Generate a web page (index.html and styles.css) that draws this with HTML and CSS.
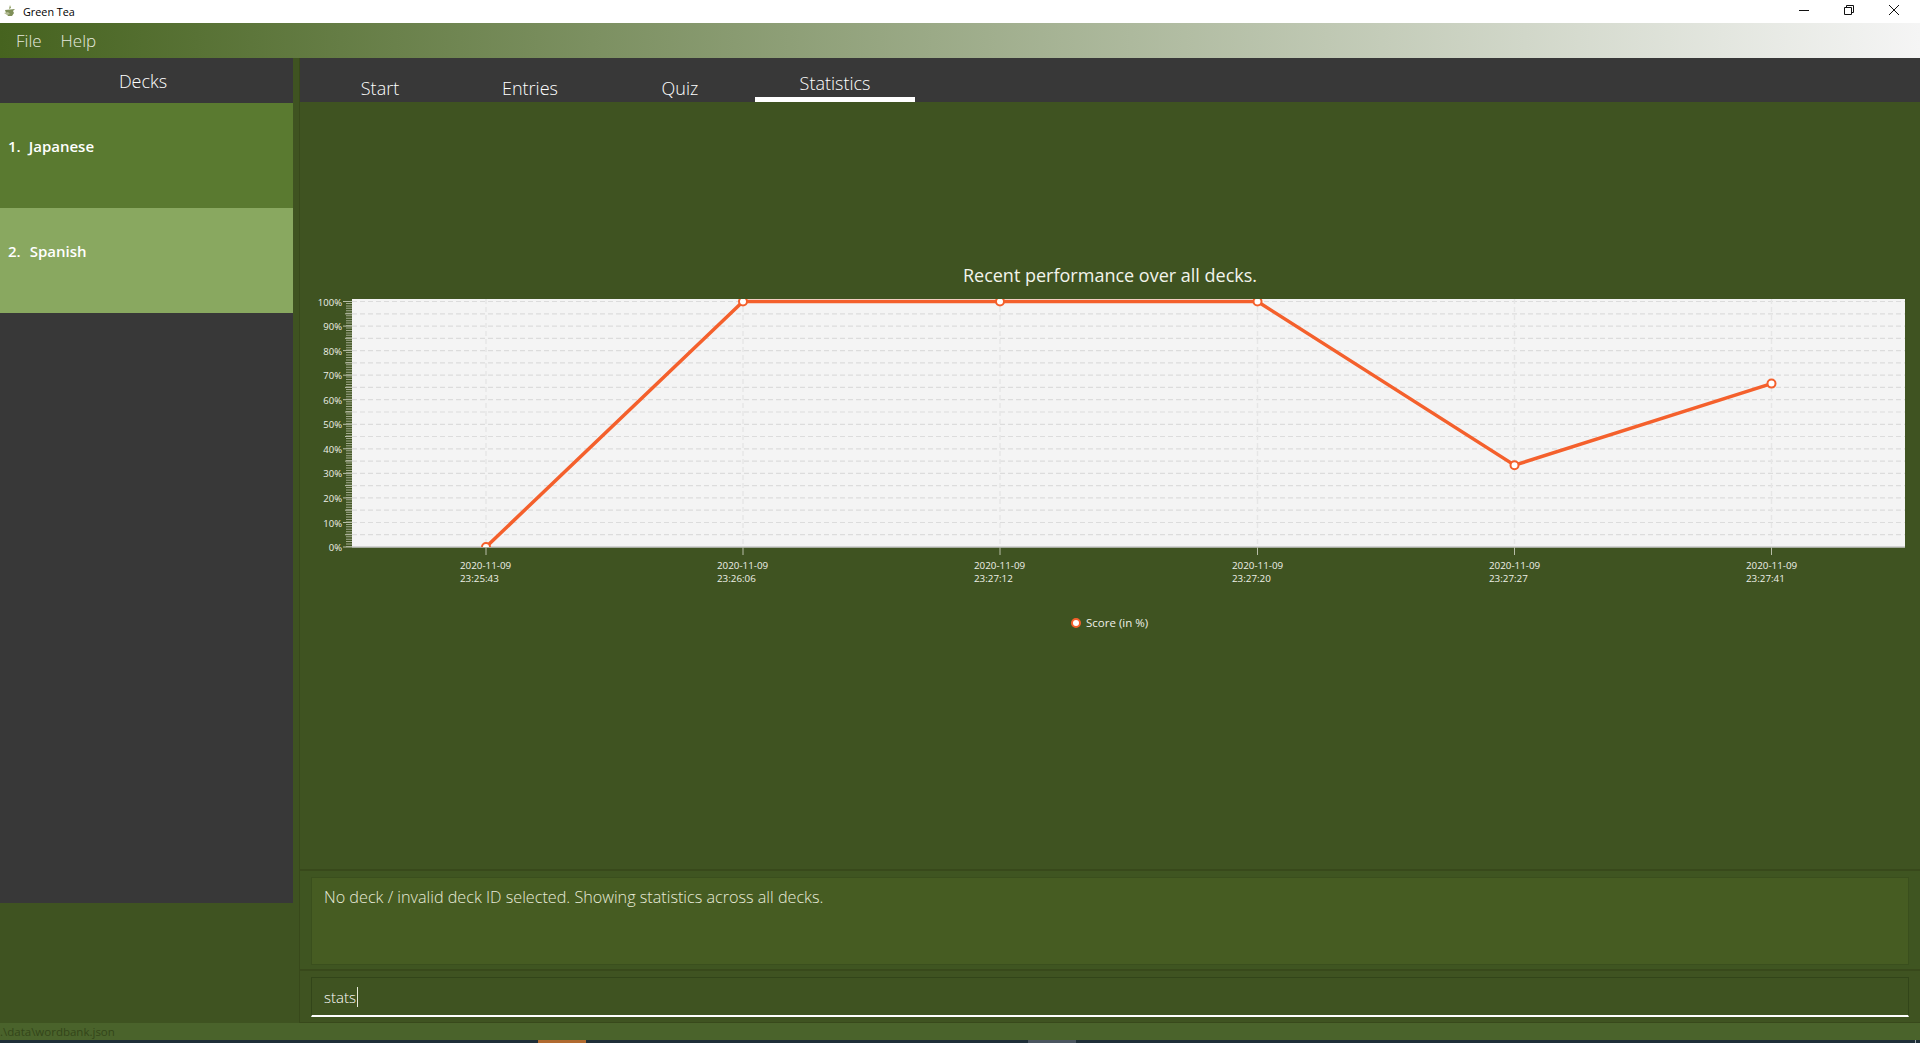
FILE: index.html
```html
<!DOCTYPE html>
<html lang="en">
<head>
  <meta charset="UTF-8" />
  <title>Green Tea</title>
  <link rel="stylesheet" href="styles.css">
</head>
<body>

  <header class="title-bar">
    <svg class="app-icon" width="12" height="13" viewBox="0 0 12 13">
      <path d="M6 0 L7 3 L5 4 Z" fill="#8a9a5a" />
      <path d="M1 5 L11 4 L9 6 L10 8 L8 11 L4 11 L2 8 Z" fill="#7f8f58" />
      <path d="M0 8 L4 7 L6 9 L3 10 Z" fill="#b5bd95" />
    </svg>
    <span class="app-name">Green Tea</span>
    <div class="win-controls">
      <svg width="12" height="12" viewBox="0 0 12 12"><path d="M1 6.5 H11" stroke="#111" fill="none" /></svg>
      <svg width="12" height="12" viewBox="0 0 12 12"><path d="M1.5 3.5 H8.5 V10.5 H1.5 Z M3.5 3.5 V1.5 H10.5 V8.5 H8.5" stroke="#111" fill="none" /></svg>
      <svg width="12" height="12" viewBox="0 0 12 12"><path d="M1 1 L11 11 M11 1 L1 11" stroke="#111" fill="none" /></svg>
    </div>
  </header>

  <nav class="menu-bar">
    <span class="menu-item">File</span>
    <span class="menu-item">Help</span>
  </nav>

  <main class="main">
    <aside class="sidebar">
      <div class="deck-panel">
        <h2 class="deck-title">Decks</h2>
        <div class="deck-card">
          <span class="deck-num">1.</span>
          <span>Japanese</span>
        </div>
        <div class="deck-card deck-card-selected">
          <span class="deck-num">2.</span>
          <span>Spanish</span>
        </div>
      </div>
    </aside>

    <section class="content">
      <div class="tabs">
        <div class="tab">Start</div>
        <div class="tab">Entries</div>
        <div class="tab">Quiz</div>
        <div class="tab tab-active">Statistics</div>
      </div>

      <div class="stats-pane">
        <h3 class="chart-title">Recent performance over all decks.</h3>
        <svg class="chart" width="1620" height="360" viewBox="300 287 1620 360">
          <defs>
            <clipPath id="plotClip"><rect x="352" y="299" width="1553" height="248" /></clipPath>
          </defs>
          <rect x="352" y="299" width="1553" height="248" fill="#f4f4f4" />

          <!-- grid every 5% -->
          <path class="grid-h" d="M352 301.5H1905 M352 313.8H1905 M352 326.1H1905 M352 338.3H1905 M352 350.6H1905 M352 362.9H1905 M352 375.2H1905 M352 387.4H1905 M352 399.7H1905 M352 412H1905 M352 424.3H1905 M352 436.5H1905 M352 448.8H1905 M352 461.1H1905 M352 473.4H1905 M352 485.6H1905 M352 497.9H1905 M352 510.2H1905 M352 522.5H1905 M352 534.7H1905" />
          <path class="grid-v" d="M486 299V547 M743 299V547 M1000 299V547 M1257.5 299V547 M1514.5 299V547 M1771.5 299V547" />

          <!-- axes -->
          <line class="tick-minor" x1="349" y1="547" x2="349" y2="301" />
          <path class="tick" d="M343 301.5H352 M343 326.1H352 M343 350.6H352 M343 375.2H352 M343 399.7H352 M343 424.3H352 M343 448.8H352 M343 473.4H352 M343 497.9H352 M343 522.5H352 M343 547H352" />
          <path class="tick" d="M345 313.8H352 M345 338.3H352 M345 362.9H352 M345 387.4H352 M345 412H352 M345 436.5H352 M345 461.1H352 M345 485.6H352 M345 510.2H352 M345 534.7H352" />
          <line class="axis-x" x1="352" y1="547" x2="1905" y2="547" />
          <path class="tick" d="M486 547V555 M743 547V555 M1000 547V555 M1257.5 547V555 M1514.5 547V555 M1771.5 547V555" />

          <g class="label-y">
            <text x="342" y="306">100%</text>
            <text x="342" y="330">90%</text>
            <text x="342" y="355">80%</text>
            <text x="342" y="379">70%</text>
            <text x="342" y="404">60%</text>
            <text x="342" y="428">50%</text>
            <text x="342" y="453">40%</text>
            <text x="342" y="477">30%</text>
            <text x="342" y="502">20%</text>
            <text x="342" y="527">10%</text>
            <text x="342" y="551">0%</text>
          </g>

          <g class="label-x">
            <text x="460" y="569">2020-11-09</text><text x="460" y="582">23:25:43</text>
            <text x="717" y="569">2020-11-09</text><text x="717" y="582">23:26:06</text>
            <text x="974" y="569">2020-11-09</text><text x="974" y="582">23:27:12</text>
            <text x="1232" y="569">2020-11-09</text><text x="1232" y="582">23:27:20</text>
            <text x="1489" y="569">2020-11-09</text><text x="1489" y="582">23:27:27</text>
            <text x="1746" y="569">2020-11-09</text><text x="1746" y="582">23:27:41</text>
          </g>

          <g clip-path="url(#plotClip)">
            <polyline class="series" points="486,547 743,301.5 1000,301.5 1257.5,301.5 1514.5,465.2 1771.5,383.6" />
            <circle class="dot" cx="486" cy="547" r="4" />
            <circle class="dot" cx="743" cy="301.5" r="4" />
            <circle class="dot" cx="1000" cy="301.5" r="4" />
            <circle class="dot" cx="1257.5" cy="301.5" r="4" />
            <circle class="dot" cx="1514.5" cy="465.2" r="4" />
            <circle class="dot" cx="1771.5" cy="383.6" r="4" />
          </g>

          <circle class="dot" cx="1076" cy="623" r="4" />
          <text class="legend" x="1086" y="627">Score (in %)</text>
        </svg>
      </div>

      <div class="result-wrap">
        <div class="result-box">No deck / invalid deck ID selected. Showing statistics across all decks.</div>
      </div>

      <div class="command-wrap">
        <div class="command-box"><span class="command-text">stats</span></div>
      </div>
    </section>
  </main>

  <footer class="status-bar">.\data\wordbank.json</footer>

  <div class="taskbar">
    <span class="task-orange"></span>
    <span class="task-grey"></span>
    <span class="task-tick"></span>
  </div>

</body>
</html>
```

FILE: styles.css
```css
* {
  box-sizing: border-box;
}

html, body {
  margin: 0;
  padding: 0;
}

body {
  width: 1920px;
  height: 1043px;
  overflow: hidden;
  display: flex;
  flex-direction: column;
  background-color: #3f5321;
  font-family: 'Open Sans', 'Noto Sans', sans-serif;
  color: white;
}

.title-bar {
  height: 23px;
  flex-shrink: 0;
  display: flex;
  align-items: center;
  padding-left: 4px;
  background-color: white;
  color: black;
}

.app-icon {
  margin-right: 7px;
}

.app-name {
  font-size: 10.8px;
}

.win-controls {
  margin-left: auto;
  margin-right: 20px;
  margin-top: -4px;
  display: flex;
  gap: 33px;
}

.menu-bar {
  height: 35px;
  flex-shrink: 0;
  display: flex;
  align-items: center;
  gap: 19px;
  padding-left: 16px;
  background: linear-gradient(to right, #46631f, #f5f5f5);
}

.menu-item {
  font-size: 17px;
  font-weight: 300;
  color: #e6e9df;
}

.main {
  flex-grow: 1;
  display: flex;
  min-height: 0;
}

.sidebar {
  width: 300px;
  flex-shrink: 0;
  border-right: 1px solid #38491b;
  padding-right: 6px;
}

.deck-panel {
  height: 845px;
  background-color: #383838;
}

.deck-title {
  height: 45px;
  margin: 0;
  padding-right: 7px;
  font-size: 18px;
  font-weight: 300;
  line-height: 47px;
  text-align: center;
}

.deck-card {
  height: 105px;
  padding: 31px 8px 0;
  display: flex;
  gap: 8px;
  background-color: #5a7a30;
  font-size: 15px;
  font-weight: 600;
  line-height: 24px;
}

.deck-card-selected {
  gap: 9px;
  background-color: #89a860;
}

.content {
  flex-grow: 1;
  min-width: 0;
  display: flex;
  flex-direction: column;
}

.tabs {
  height: 44px;
  flex-shrink: 0;
  display: flex;
  padding-left: 5px;
  background-color: #383838;
}

.tab {
  width: 150px;
  padding-top: 15px;
  font-size: 18px;
  font-weight: 300;
  line-height: 30px;
  text-align: center;
}

.tab-active {
  width: 160px;
  height: 44px;
  padding-top: 10px;
  line-height: 30px;
  border-bottom: 5px solid white;
}

.stats-pane {
  height: 769px;
  flex-shrink: 0;
  padding-top: 161px;
  border-bottom: 2px solid #38491b;
}

.chart-title {
  margin: 0;
  color: #f2f4ec;
  font-size: 18px;
  font-weight: 400;
  line-height: 24px;
  text-align: center;
}

.chart {
  display: block;
}

.grid-h {
  fill: none;
  stroke: #dcdcdc;
  stroke-width: 1.2;
  stroke-dasharray: 5 3;
}

.grid-v {
  fill: none;
  stroke: #e6e6e6;
  stroke-width: 1.5;
  stroke-dasharray: 5 3;
}

.tick {
  fill: none;
  stroke: #b8bea8;
  stroke-width: 1;
}

.tick-minor {
  stroke: #a3ab8e;
  stroke-width: 6;
  stroke-dasharray: 1 1.455;
}

.axis-x {
  stroke: #c8c8c8;
  stroke-width: 1.5;
}

.label-y text {
  fill: #eef0e8;
  font-size: 9.5px;
  text-anchor: end;
}

.label-x text {
  fill: #eef0e8;
  font-size: 9.8px;
}

.series {
  fill: none;
  stroke: #f4602c;
  stroke-width: 3.5;
}

.dot {
  fill: white;
  stroke: #f4602c;
  stroke-width: 2;
}

.legend {
  fill: #eef0e8;
  font-size: 11.5px;
}

.result-wrap {
  height: 100px;
  flex-shrink: 0;
  padding: 6px 11px;
  border-bottom: 2px solid #38491b;
  background-color: #3f5521;
}

.result-box {
  height: 88px;
  padding: 8px 12px;
  border: 1px solid #3a4f1d;
  background-color: #465c22;
  font-size: 16.2px;
  font-weight: 300;
  line-height: 22px;
  color: #e8ebd9;
}

.command-wrap {
  flex-grow: 1;
  padding: 6px 11px 5px;
  border-bottom: 1px solid #38491b;
}

.command-box {
  height: 40px;
  padding: 5px 12px 0;
  border: 1px solid #324519;
  border-bottom: 2px solid white;
  font-size: 15px;
  font-weight: 300;
  line-height: 28px;
}

.command-text {
  padding-right: 1px;
  border-right: 1px solid #e8ebd9;
}

.status-bar {
  height: 17px;
  flex-shrink: 0;
  background-color: #4a632b;
  color: #334519;
  font-size: 11.5px;
  line-height: 17px;
}

.taskbar {
  height: 3px;
  flex-shrink: 0;
  display: flex;
  padding-left: 538px;
  background-color: #1f2f38;
}

.task-orange {
  width: 48px;
  background-color: #b06a30;
}

.task-grey {
  width: 48px;
  margin-left: 442px;
  background-color: #4b5660;
}

.task-tick {
  width: 1px;
  margin-left: 839px;
  background-color: #9aa3a8;
}
```
